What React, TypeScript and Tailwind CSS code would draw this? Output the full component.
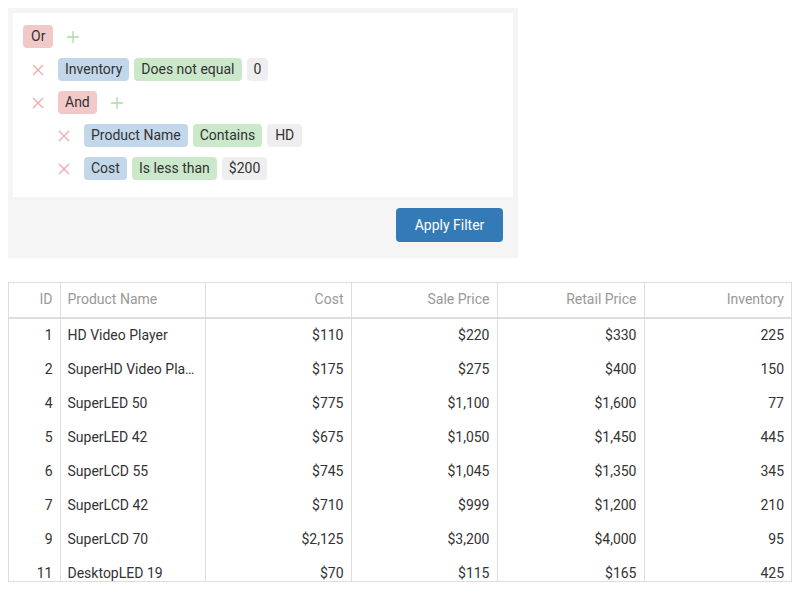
import React from "react";

function XIcon() {
  return (
    <svg width="12" height="12" viewBox="0 0 12 12" className="shrink-0">
      <path d="M1 1L11 11M11 1L1 11" stroke="#f2a7a7" strokeWidth="1.3" />
    </svg>
  );
}

function PlusIcon() {
  return (
    <svg width="12" height="12" viewBox="0 0 12 12" className="shrink-0">
      <path d="M6 0V12M0 6H12" stroke="#a9dca9" strokeWidth="1.3" />
    </svg>
  );
}

function Pill({ c, wide, children }: { c: string; wide?: boolean; children: React.ReactNode }) {
  return (
    <span className={`h-[23px] leading-[23px] ${wide ? "px-[8px]" : "px-[7px]"} rounded-[4px] text-[14px] text-[#333] ${c}`}>
      {children}
    </span>
  );
}

const red = "bg-[#f2c9c9]";
const blue = "bg-[#c3d7ea]";
const green = "bg-[#cbe8cb]";
const grey = "bg-[#eeeeee]";

const rows = [
  ["1", "HD Video Player", "$110", "$220", "$330", "225"],
  ["2", "SuperHD Video Player", "$175", "$275", "$400", "150"],
  ["4", "SuperLED 50", "$775", "$1,100", "$1,600", "77"],
  ["5", "SuperLED 42", "$675", "$1,050", "$1,450", "445"],
  ["6", "SuperLCD 55", "$745", "$1,045", "$1,350", "345"],
  ["7", "SuperLCD 42", "$710", "$999", "$1,200", "210"],
  ["9", "SuperLCD 70", "$2,125", "$3,200", "$4,000", "95"],
  ["11", "DesktopLED 19", "$70", "$115", "$165", "425"],
];

const headers = ["ID", "Product Name", "Cost", "Sale Price", "Retail Price", "Inventory"];
const widths = [51, 145, 146, 146, 147, 147];

export default function App() {
  return (
    <div className="p-2 font-['Roboto',sans-serif] text-[14px] text-[#333] bg-white w-[800px] h-[600px] overflow-hidden">
      <div className="w-[510px] bg-[#f5f5f5] p-[5px] pb-[16px]">
        <div className="bg-white pl-[10px] pt-[12px] pb-[17px] flex flex-col gap-[10px]">
          <div className="flex items-center">
            <Pill c={red} wide>Or</Pill>
            <span className="ml-[14px]"><PlusIcon /></span>
          </div>
          <div className="flex items-center pl-[9px]">
            <XIcon />
            <div className="flex items-center gap-[5px] ml-[14px]">
              <Pill c={blue}>Inventory</Pill>
              <Pill c={green}>Does not equal</Pill>
              <Pill c={grey}>0</Pill>
            </div>
          </div>
          <div className="flex items-center pl-[9px]">
            <XIcon />
            <div className="flex items-center ml-[14px]">
              <Pill c={red}>And</Pill>
              <span className="ml-[14px]"><PlusIcon /></span>
            </div>
          </div>
          <div className="flex items-center pl-[35px]">
            <XIcon />
            <div className="flex items-center gap-[5px] ml-[14px]">
              <Pill c={blue}>Product Name</Pill>
              <Pill c={green}>Contains</Pill>
              <Pill c={grey} wide>HD</Pill>
            </div>
          </div>
          <div className="flex items-center pl-[35px]">
            <XIcon />
            <div className="flex items-center gap-[5px] ml-[14px]">
              <Pill c={blue}>Cost</Pill>
              <Pill c={green}>Is less than</Pill>
              <Pill c={grey}>$200</Pill>
            </div>
          </div>
        </div>
        <div className="flex justify-end pr-[10px] mt-[11px]">
          <button className="bg-[#337ab7] text-white rounded-[4px] w-[107px] h-[34px] text-[14px] flex items-center justify-center">
            Apply Filter
          </button>
        </div>
      </div>

      <div className="mt-[24px] w-[784px] h-[300px] border border-[#dddddd] overflow-hidden">
        <table className="table-fixed border-collapse w-[782px]">
          <colgroup>
            {widths.map((w, i) => (
              <col key={i} style={{ width: i === 5 ? undefined : w }} />
            ))}
          </colgroup>
          <thead>
            <tr className="border-b-2 border-[#dddddd] h-[35px]">
              {headers.map((h, i) => (
                <th
                  key={h}
                  className={`font-normal text-[#999] px-[7px] pb-[1px] ${i === 1 ? "text-left" : "text-right"} ${i < 5 ? "border-r border-[#dddddd]" : ""}`}
                >
                  {h}
                </th>
              ))}
            </tr>
          </thead>
          <tbody>
            {rows.map((r) => (
              <tr key={r[0]} className="h-[34px]">
                {r.map((v, i) => (
                  <td
                    key={i}
                    className={`px-[7px] ${i === 1 ? "text-left" : "text-right"} ${i < 5 ? "border-r border-[#dddddd]" : ""}`}
                  >
                    {i === 1 ? <div className="truncate">{v}</div> : v}
                  </td>
                ))}
              </tr>
            ))}
          </tbody>
        </table>
      </div>
    </div>
  );
}
